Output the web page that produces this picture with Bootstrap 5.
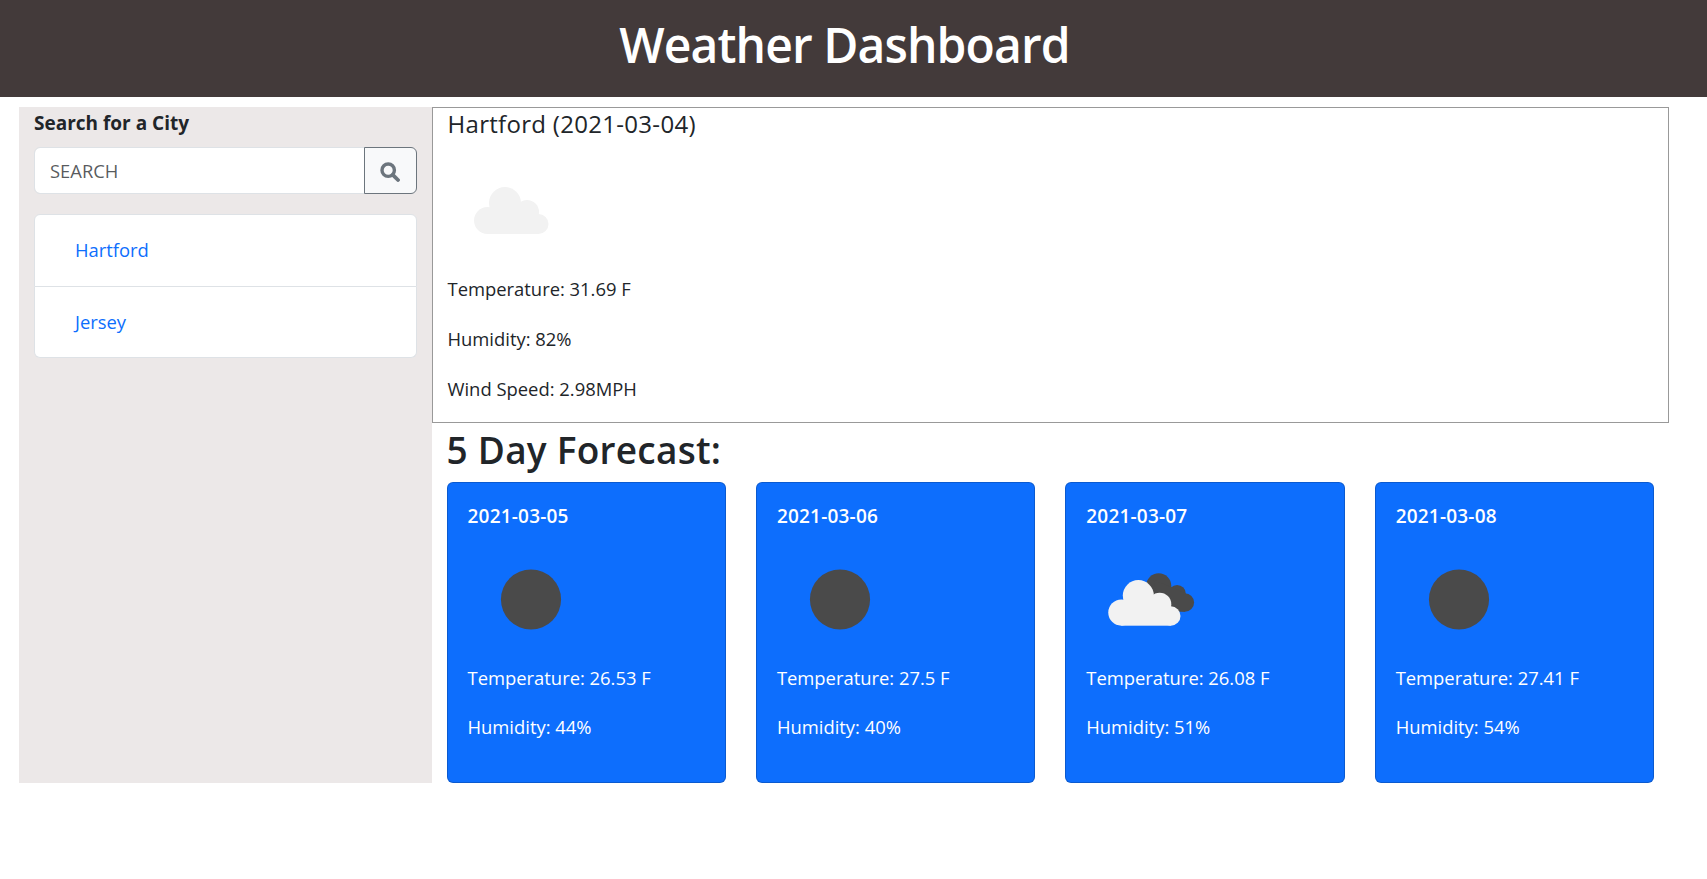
<!DOCTYPE html>
<html lang="en">
<head>
  <meta charset="UTF-8">
  <meta name="viewport" content="width=device-width, initial-scale=1.0">
  <title>Weather Dashboard</title>
  <link href="https://cdn.jsdelivr.net/npm/bootstrap@5.3.3/dist/css/bootstrap.min.css" rel="stylesheet">
  <style>
    body {
      font-family: "Open Sans", "Liberation Sans", sans-serif;
      font-size: 18.4px;
      line-height: 27px;
      color: #212529;
    }
    .page-head {
      height: 97px;
      background-color: #433a3a;
      padding-right: 18px;
    }
    .page-head h1 {
      font-size: 48px;
      font-weight: 600;
      line-height: 89px;
      letter-spacing: -0.9px;
    }
    .dash-wrap {
      width: 1650px;
      margin: 10px 0 0 19px;
    }
    .side-panel {
      background-color: #ece8e8;
      padding: 3px 15px 0;
    }
    .side-title {
      font-size: 19px;
      font-weight: 700;
      line-height: 27px;
      margin-bottom: 10px;
    }
    .search-input {
      height: 47px;
      font-size: 18.4px;
      padding-left: 15px;
    }
    .search-btn {
      width: 53px;
      background-color: #f8f9fa;
      border-color: #6c757d;
      padding: 0;
    }
    .city-list {
      margin-top: 20px;
    }
    .city-list .list-group-item {
      padding: 21px 40px 22.5px;
      font-size: 18.4px;
      line-height: 27px;
      color: #0d6efd;
    }
    .now-box {
      height: 316px;
      border: 1px solid #999;
      padding: 0 15px;
    }
    .now-title {
      font-size: 24px;
      font-weight: 500;
      line-height: 32px;
      letter-spacing: 0.3px;
      margin: 0 0 17px;
    }
    .wx-icon {
      display: block;
      margin-left: 18px;
    }
    .wx-line {
      line-height: 27px;
      margin-bottom: 23px;
    }
    .now-box .wx-icon {
      margin-bottom: 18px;
    }
    .forecast-title {
      font-size: 37px;
      font-weight: 600;
      line-height: 48px;
      margin: 3px 0 8px;
      padding-left: 15px;
      letter-spacing: 0.25px;
    }
    .day-row {
      --bs-gutter-x: 30px;
      margin: 0;
    }
    .day-card {
      height: 301px;
      padding: 20px;
    }
    .day-card .card-title {
      font-size: 19px;
      font-weight: 600;
      line-height: 27px;
      letter-spacing: 0.2px;
      margin-bottom: 21px;
    }
    .day-card .wx-icon {
      margin-left: 13px;
      margin-bottom: 16px;
    }
    .day-card .wx-line {
      margin-bottom: 22px;
    }
    .sprite-defs {
      display: none;
    }
  </style>
</head>
<body>
  <svg class="sprite-defs">
    <symbol id="icon-cloud" viewBox="0 0 100 100">
      <g fill="#f2f2f2">
        <circle cx="21.5" cy="63.5" r="13.5"/>
        <circle cx="39" cy="46" r="16"/>
        <circle cx="61" cy="55" r="12"/>
        <circle cx="72.5" cy="67" r="10"/>
        <rect x="21.5" y="55" width="51" height="22"/>
      </g>
    </symbol>
    <symbol id="icon-clear" viewBox="0 0 100 100">
      <circle cx="50" cy="50" r="31" fill="#4a4a4a"/>
    </symbol>
    <symbol id="icon-overcast" viewBox="0 0 100 100">
      <g fill="#4a4a4a">
        <circle cx="60" cy="36" r="13"/>
        <circle cx="79" cy="44" r="9"/>
        <circle cx="87" cy="53" r="9.5"/>
        <path d="M55 30L87 43V62.5H60z"/>
      </g>
      <use href="#icon-cloud"/>
    </symbol>
  </svg>

  <header class="page-head text-center text-white">
    <h1 class="m-0">Weather Dashboard</h1>
  </header>

  <div class="dash-wrap">
    <div class="row g-0">
      <aside class="col-3 side-panel">
        <div class="side-title">Search for a City</div>
        <div class="input-group">
          <input type="text" class="form-control search-input" placeholder="SEARCH">
          <button class="btn search-btn" type="button" aria-label="Search">
            <svg width="20" height="20" viewBox="0 0 20 20"><circle cx="8.2" cy="8.2" r="6.2" fill="none" stroke="#6c757d" stroke-width="3.4"/><path d="M12.8 12.8L18 18" stroke="#6c757d" stroke-width="3.8" stroke-linecap="round"/></svg>
          </button>
        </div>
        <ul class="list-group city-list">
          <li class="list-group-item">Hartford</li>
          <li class="list-group-item">Jersey</li>
        </ul>
      </aside>

      <main class="col-9">
        <section class="now-box">
          <h2 class="now-title">Hartford (2021-03-04)</h2>
          <svg class="wx-icon" width="100" height="100"><use href="#icon-cloud"/></svg>
          <p class="wx-line">Temperature: 31.69 F</p>
          <p class="wx-line">Humidity: 82%</p>
          <p class="wx-line">Wind Speed: 2.98MPH</p>
        </section>

        <h2 class="forecast-title">5 Day Forecast:</h2>

        <div class="row day-row">
          <div class="col-3">
            <div class="card text-bg-primary day-card">
              <h5 class="card-title">2021-03-05</h5>
              <svg class="wx-icon" width="100" height="100"><use href="#icon-clear"/></svg>
              <p class="wx-line">Temperature: 26.53 F</p>
              <p class="wx-line">Humidity: 44%</p>
            </div>
          </div>
          <div class="col-3">
            <div class="card text-bg-primary day-card">
              <h5 class="card-title">2021-03-06</h5>
              <svg class="wx-icon" width="100" height="100"><use href="#icon-clear"/></svg>
              <p class="wx-line">Temperature: 27.5 F</p>
              <p class="wx-line">Humidity: 40%</p>
            </div>
          </div>
          <div class="col-3">
            <div class="card text-bg-primary day-card">
              <h5 class="card-title">2021-03-07</h5>
              <svg class="wx-icon" width="100" height="100"><use href="#icon-overcast"/></svg>
              <p class="wx-line">Temperature: 26.08 F</p>
              <p class="wx-line">Humidity: 51%</p>
            </div>
          </div>
          <div class="col-3">
            <div class="card text-bg-primary day-card">
              <h5 class="card-title">2021-03-08</h5>
              <svg class="wx-icon" width="100" height="100"><use href="#icon-clear"/></svg>
              <p class="wx-line">Temperature: 27.41 F</p>
              <p class="wx-line">Humidity: 54%</p>
            </div>
          </div>
        </div>
      </main>
    </div>
  </div>

  <script src="https://cdn.jsdelivr.net/npm/bootstrap@5.3.3/dist/js/bootstrap.bundle.min.js"></script>
</body>
</html>
